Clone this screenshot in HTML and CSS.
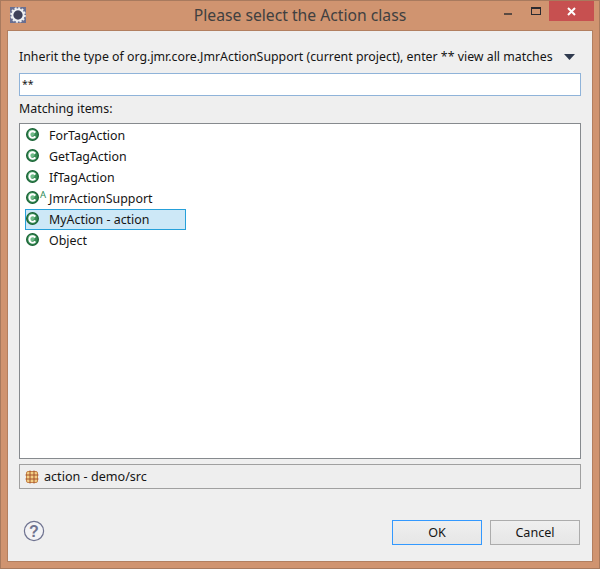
FILE: index.html
```html
<!DOCTYPE html>
<html lang="en">
<head>
<meta charset="utf-8">
<title>Please select the Action class</title>
<link rel="stylesheet" href="styles.css">
</head>
<body>
<div class="window">
  <header class="titlebar">
    <svg class="app-icon" width="16" height="16" viewBox="0 0 16 16">
      <rect width="16" height="16" fill="#6a6f90"/>
      <circle cx="8" cy="8" r="5.6" fill="none" stroke="#eef0f2" stroke-width="2"/>
      <circle cx="8" cy="8" r="6.8" fill="none" stroke="#eef0f2" stroke-width="2" stroke-dasharray="2 1.56"/>
      <circle cx="8" cy="8" r="4.4" fill="#3d4058"/>
    </svg>
    <h1 class="title">Please select the Action class</h1>
    <div class="controls">
      <span class="ctl ctl-min"><i class="min-glyph"></i></span>
      <span class="ctl ctl-max"><i class="max-glyph"></i></span>
      <span class="ctl ctl-close">
        <svg width="9" height="9" viewBox="0 0 9 9"><path d="M1 1l7 7M8 1l-7 7" stroke="#fff" stroke-width="2" fill="none"/></svg>
      </span>
    </div>
  </header>
  <main class="panel">
    <div class="prompt-row">
      <span class="prompt">Inherit the type of org.jmr.core.JmrActionSupport (current project), enter ** view all matches</span>
      <svg class="menu-arrow" width="11" height="6" viewBox="0 0 11 6"><path d="M0 0h11L5.5 6z" fill="#2f3a4e"/></svg>
    </div>
    <div class="filter">**</div>
    <div class="label">Matching items:</div>
    <ul class="list">
      <li class="item"><svg class="cls" viewBox="0 0 14 14"><use href="#c-icon"/></svg><span class="name">ForTagAction</span></li>
      <li class="item"><svg class="cls" viewBox="0 0 14 14"><use href="#c-icon"/></svg><span class="name">GetTagAction</span></li>
      <li class="item"><svg class="cls" viewBox="0 0 14 14"><use href="#c-icon"/></svg><span class="name">IfTagAction</span></li>
      <li class="item"><svg class="cls" viewBox="0 0 14 14"><use href="#c-icon"/></svg><span class="abstract">A</span><span class="name">JmrActionSupport</span></li>
      <li class="item selected"><svg class="cls" viewBox="0 0 14 14"><use href="#c-icon"/></svg><span class="name">MyAction - action</span></li>
      <li class="item"><svg class="cls" viewBox="0 0 14 14"><use href="#c-icon"/></svg><span class="name">Object</span></li>
    </ul>
    <div class="status">
      <svg width="14" height="14" viewBox="0 0 14 14">
        <rect x="1.5" y="1.5" width="11" height="11" rx="1.5" fill="#f3cf85" stroke="#c4824a"/>
        <path d="M5 0.5v13M9 0.5v13M0.5 5h13M0.5 9h13" stroke="#a5532c" stroke-width="1" fill="none"/>
      </svg>
      <span>action - demo/src</span>
    </div>
    <footer class="footer">
      <svg class="help" width="22" height="22" viewBox="0 0 22 22">
        <circle cx="11" cy="11" r="9.6" fill="#f3f3f5" stroke="#6f7390" stroke-width="1.2"/>
        <text x="11" y="16.5" text-anchor="middle" class="help-mark">?</text>
      </svg>
      <div class="buttons">
        <button class="btn btn-default">OK</button>
        <button class="btn">Cancel</button>
      </div>
    </footer>
  </main>
</div>
<svg class="defs" width="0" height="0">
  <defs>
    <g id="c-icon">
      <circle cx="7" cy="7" r="6.3" fill="#348a52" stroke="#1a6336" stroke-width="1.4"/>
      <circle cx="6" cy="5.4" r="3.4" fill="#6fbb88"/>
      <path d="M10 5A3.5 3.5 0 1 0 10 9" fill="none" stroke="#fff" stroke-width="2.2"/>
    </g>
  </defs>
</svg>
</body>
</html>
```
FILE: styles.css
```css
html, body {
  margin: 0;
  padding: 0;
  width: 600px;
  height: 569px;
  overflow: hidden;
  background: #d09470;
  font-family: "Noto Sans", "Open Sans", sans-serif;
  color: #151515;
}

.window {
  width: 600px;
  height: 569px;
  box-sizing: border-box;
  display: flex;
  flex-direction: column;
  background: #d09470;
  border: 1px solid #a87a5e;
  padding: 0 6px 6px;
}

.titlebar {
  height: 29px;
  flex: none;
  display: flex;
  align-items: flex-start;
}

.app-icon {
  flex: none;
  margin: 6px 0 0 3px;
}

.title {
  flex: 1;
  margin: 4px 0 0;
  padding-left: 80px;
  text-align: center;
  font-size: 15.7px;
  line-height: 21px;
  font-weight: 400;
  color: #404040;
}

.controls {
  flex: none;
  display: flex;
  margin-right: -1px;
}

.ctl {
  display: flex;
  align-items: center;
  justify-content: center;
  height: 20px;
}

.ctl-min { width: 28px; }
.ctl-max { width: 27px; }
.ctl-close { width: 45px; background: #c75050; }

.min-glyph {
  display: block;
  width: 8px;
  height: 2px;
  margin-top: 6px;
  background: #5a4a42;
}

.max-glyph {
  display: block;
  width: 8px;
  height: 5px;
  border: 1px solid #2a2a30;
  border-top-width: 2px;
}

.panel {
  flex: 1;
  min-height: 0;
  display: flex;
  flex-direction: column;
  background: #efefef;
  border: 1px solid #b27f60;
  padding: 0 11px;
}

.prompt-row {
  display: flex;
  align-items: center;
  justify-content: space-between;
  height: 42px;
  padding: 9px 6px 0 0;
  box-sizing: border-box;
}

.prompt {
  font-size: 12.35px;
  line-height: 18px;
  white-space: nowrap;
}

.menu-arrow { flex: none; }

.filter {
  height: 23px;
  box-sizing: border-box;
  background: #fff;
  border: 1px solid #8fb3d9;
  padding: 2px;
  font-size: 10.5px;
  line-height: 16px;
}

.label {
  height: 27px;
  font-size: 12.4px;
  line-height: 26px;
}

.list {
  margin: 0;
  padding: 1px 5px 0;
  list-style: none;
  height: 336px;
  box-sizing: border-box;
  background: #fff;
  border: 1px solid #868a8e;
  flex: none;
}

.item {
  position: relative;
  width: 161px;
  height: 21px;
  box-sizing: border-box;
  display: flex;
  align-items: center;
  font-size: 12.4px;
  border: 1px solid transparent;
}

.item.selected {
  background: #cde8f7;
  border-color: #26a0da;
}

.cls {
  position: absolute;
  left: 0;
  top: 2px;
  width: 13px;
  height: 13px;
}

.abstract {
  position: absolute;
  left: 14px;
  top: 0;
  font-size: 9.5px;
  line-height: 11px;
  color: #2f8c58;
}

.name {
  margin-left: 23px;
  line-height: 18px;
  white-space: nowrap;
}

.status {
  margin-top: 5px;
  height: 25px;
  box-sizing: border-box;
  display: flex;
  align-items: center;
  gap: 5px;
  padding-left: 5px;
  background: #eeeeee;
  border: 1px solid #a0a0a0;
  font-size: 12.6px;
}

.footer {
  flex: 1;
  display: flex;
  align-items: flex-start;
  justify-content: space-between;
  padding-top: 31px;
}

.help { margin: 0 0 0 4px; }

.help-mark {
  font-family: "Liberation Sans", sans-serif;
  font-weight: 700;
  font-size: 16px;
  fill: #6f7390;
}

.buttons {
  display: flex;
  gap: 8px;
  margin-right: 1px;
}

.btn {
  width: 90px;
  height: 25px;
  padding: 0;
  font: 12.6px "Noto Sans", "Open Sans", sans-serif;
  color: #151515;
  background: linear-gradient(#efefef, #e6e6e6);
  border: 1px solid #acacac;
}

.btn-default { border-color: #3399ff; }

.defs { position: absolute; }
```
